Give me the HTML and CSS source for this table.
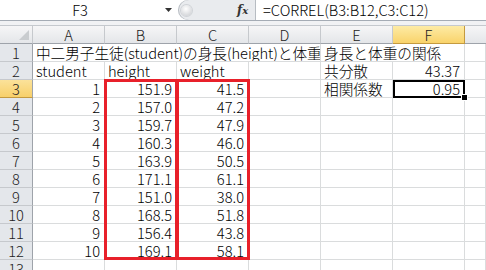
FILE: index.html
```html
<!DOCTYPE html>
<html lang="ja">
<head>
<meta charset="utf-8">
<link rel="stylesheet" href="styles.css">
</head>
<body>
<div class="app">
  <div class="fbar">
    <div class="namebox">F3</div>
    <div class="dd"><svg width="8" height="5" viewBox="0 0 8 5"><path d="M0 0H7L3.5 4Z" fill="#333"/></svg></div>
    <div class="tools">
      <div class="knob"></div>
      <div class="fx"><i>f</i><span>x</span></div>
    </div>
    <div class="formula">=CORREL(B3:B12,C3:C12)</div>
  </div>
  <div class="band"></div>
  <div class="sheet">
    <div class="ch corner"><svg width="10" height="10" viewBox="0 0 10 10"><path d="M10 0V10H0Z" fill="#c9cccf"/></svg></div>
    <div class="ch">A</div><div class="ch">B</div><div class="ch">C</div><div class="ch">D</div><div class="ch">E</div><div class="ch sel">F</div><div class="ch last"></div>

    <div class="rh">1</div>
    <div class="c span4">中二男子生徒(student)の身長(height)と体重(weight)</div>
    <div class="c span2">身長と体重の関係</div>
    <div class="c"></div>

    <div class="rh">2</div>
    <div class="c">student</div><div class="c">height</div><div class="c">weight</div><div class="c"></div><div class="c">共分散</div><div class="c r">43.37</div><div class="c"></div>

    <div class="rh sel">3</div>
    <div class="c r">1</div><div class="c r">151.9</div><div class="c r">41.5</div><div class="c"></div><div class="c">相関係数</div><div class="c r active">0.95<span class="handle"></span></div><div class="c"></div>

    <div class="rh">4</div>
    <div class="c r">2</div><div class="c r">157.0</div><div class="c r">47.2</div><div class="c"></div><div class="c"></div><div class="c"></div><div class="c"></div>

    <div class="rh">5</div>
    <div class="c r">3</div><div class="c r">159.7</div><div class="c r">47.9</div><div class="c"></div><div class="c"></div><div class="c"></div><div class="c"></div>

    <div class="rh">6</div>
    <div class="c r">4</div><div class="c r">160.3</div><div class="c r">46.0</div><div class="c"></div><div class="c"></div><div class="c"></div><div class="c"></div>

    <div class="rh">7</div>
    <div class="c r">5</div><div class="c r">163.9</div><div class="c r">50.5</div><div class="c"></div><div class="c"></div><div class="c"></div><div class="c"></div>

    <div class="rh">8</div>
    <div class="c r">6</div><div class="c r">171.1</div><div class="c r">61.1</div><div class="c"></div><div class="c"></div><div class="c"></div><div class="c"></div>

    <div class="rh">9</div>
    <div class="c r">7</div><div class="c r">151.0</div><div class="c r">38.0</div><div class="c"></div><div class="c"></div><div class="c"></div><div class="c"></div>

    <div class="rh">10</div>
    <div class="c r">8</div><div class="c r">168.5</div><div class="c r">51.8</div><div class="c"></div><div class="c"></div><div class="c"></div><div class="c"></div>

    <div class="rh">11</div>
    <div class="c r">9</div><div class="c r">156.4</div><div class="c r">43.8</div><div class="c"></div><div class="c"></div><div class="c"></div><div class="c"></div>

    <div class="rh">12</div>
    <div class="c r">10</div><div class="c r">169.1</div><div class="c r">58.1</div><div class="c"></div><div class="c"></div><div class="c"></div><div class="c"></div>

    <div class="rh">13</div>
    <div class="c"></div><div class="c"></div><div class="c"></div><div class="c"></div><div class="c"></div><div class="c"></div><div class="c"></div>

    <div class="redbox box-b"></div>
    <div class="redbox box-c"></div>
  </div>
</div>
</body>
</html>
```

FILE: styles.css
```css
html, body {
  margin: 0;
  padding: 0;
  background: #fff;
  overflow: hidden;
}
.app {
  width: 486px;
  height: 270px;
  font-family: "Noto Sans CJK JP", "Noto Sans", sans-serif;
  font-weight: 300;
  font-size: 14.67px;
  color: #000;
}
.fbar {
  display: flex;
  height: 21px;
  background: #fff;
  border-bottom: 1px solid #a5acb5;
  box-sizing: border-box;
}
.namebox {
  width: 160px;
  text-align: center;
  line-height: 20px;
}
.dd {
  width: 18px;
  display: flex;
  align-items: center;
  justify-content: center;
}
.tools {
  width: 77px;
  display: flex;
  align-items: center;
  justify-content: space-between;
  background: #e9ebee;
  border-radius: 10px 0 0 10px;
  box-shadow: inset 1px 0 0 #b7bcc2;
  box-sizing: border-box;
  padding: 0 4px 0 3px;
}
.knob {
  width: 11px;
  height: 11px;
  border-radius: 50%;
  background: radial-gradient(circle at 45% 35%, #ffffff 0, #e6e7e9 45%, #c6c9cd 100%);
  box-shadow: 0 0 0 1px #d0d3d7;
}
.fx {
  width: 14px;
  font-family: "DejaVu Serif", serif;
  font-weight: bold;
  font-size: 12px;
  line-height: 20px;
  color: #333;
}
.fx span { font-style: italic; font-size: 10px; }
.formula {
  flex: 1;
  padding-left: 7px;
  line-height: 20px;
  white-space: nowrap;
  border-left: 1px solid #b7bcc2;
}
.band {
  height: 5px;
  background: #f1f2f4;
  border-bottom: 1px solid #c5c9ce;
  box-sizing: border-box;
}
.sheet {
  position: relative;
  display: grid;
  grid-template-columns: 33px repeat(6, 72px) 1fr;
  grid-auto-rows: 18px;
}
.ch {
  box-sizing: border-box;
  background: linear-gradient(#f6f6f7, #e4e6e9);
  border-right: 1px solid #c6c9cd;
  border-bottom: 1px solid #9ea3aa;
  text-align: center;
  line-height: 17px;
  color: #222;
}
.ch.corner {
  display: flex;
  align-items: flex-end;
  justify-content: flex-end;
  padding: 0 3px 3px 0;
}
.ch.sel {
  background: linear-gradient(#fdeba5, #f9d36b);
  border-right: 1px solid #c49a3f;
  border-bottom: 1px solid #c49a3f;
}
.ch.last { border-right: none; }
.rh {
  box-sizing: border-box;
  background: #e4e7eb;
  border-right: 1px solid #9ea3aa;
  border-bottom: 1px solid #c6c9cd;
  text-align: center;
  line-height: 18px;
  color: #222;
}
.rh.sel {
  background: linear-gradient(#fbe29a, #f8d06a);
  border-bottom: 1px solid #c49a3f;
}
.c {
  position: relative;
  box-sizing: border-box;
  border-right: 1px solid #dadcdd;
  border-bottom: 1px solid #dadcdd;
  line-height: 18px;
  padding: 0 4px 0 3px;
  white-space: nowrap;
}
.c.r { text-align: right; }
.span4 { grid-column: span 4; overflow: hidden; letter-spacing: -0.05px; }
.span2 { grid-column: span 2; overflow: hidden; }
.active {
  outline: 2px solid #000;
  outline-offset: -2px;
}
.handle {
  position: absolute;
  right: -4px;
  bottom: -4px;
  width: 5px;
  height: 5px;
  background: #000;
  border: 1px solid #fff;
  z-index: 2;
}
.redbox {
  position: absolute;
  top: 53px;
  height: 181px;
  width: 75px;
  box-sizing: border-box;
  border: 3px solid #e8202a;
}
.box-b { left: 104px; }
.box-c { left: 175px; }
```
